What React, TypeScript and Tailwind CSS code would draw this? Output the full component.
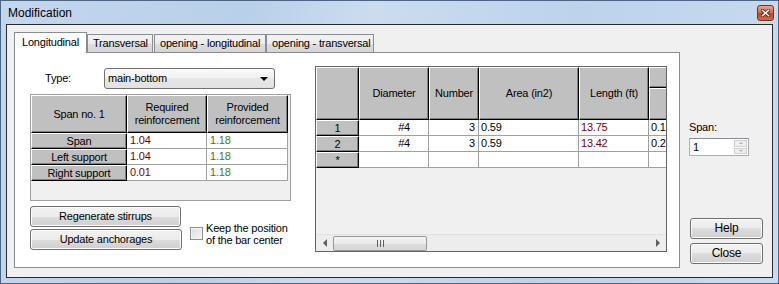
import React from 'react';

const BTN =
    'flex items-center justify-center rounded-[3px] border border-[#707070] bg-[linear-gradient(#f2f2f2_0%,#ebebeb_50%,#dddddd_50%,#cfcfcf_100%)] shadow-[inset_0_0_0_1px_#fcfcfc] text-black';

const HEAD =
    'flex items-center justify-center text-center bg-[#c0c0c0] border border-t-white border-l-white border-r-black border-b-black shadow-[inset_-1px_-1px_0_#808080] leading-[13px] shrink-0';

const CELL = 'flex items-center border-r border-b border-[#a0a0a0] bg-white shrink-0 overflow-hidden whitespace-nowrap';

function Head({ w, children }: { w: string; children: React.ReactNode }) {
    return <div className={`${HEAD} ${w} h-full`}>{children}</div>;
}

function Tab({ label, w, active }: { label: string; w: string; active?: boolean }) {
    if (active) {
        return (
            <div className={`${w} h-[21px] relative z-10 bg-white border border-b-0 border-[#898c95] flex items-start pl-[7px] pt-[3px] whitespace-nowrap`}>
                {label}
            </div>
        );
    }
    return (
        <div className={`${w} h-[19px] border border-[#898c95] bg-[linear-gradient(#f3f3f3_0%,#ebebeb_50%,#dedede_50%,#d5d5d5_100%)] flex items-center pl-[5px] pb-px whitespace-nowrap overflow-hidden`}>
            {label}
        </div>
    );
}

const LEFT_ROWS = [
    { name: 'Span', req: '1.04', prov: '1.18' },
    { name: 'Left support', req: '1.04', prov: '1.18' },
    { name: 'Right support', req: '0.01', prov: '1.18' },
];

const RIGHT_ROWS = [
    { id: '1', dia: '#4', num: '3', area: '0.59', len: '13.75', next: '0.1' },
    { id: '2', dia: '#4', num: '3', area: '0.59', len: '13.42', next: '0.2' },
    { id: '*', dia: '', num: '', area: '', len: '', next: '' },
];

function LeftGrid() {
    return (
        <div className="w-[261px] h-[107px] border border-[#a0a0a0] bg-[#f0f0f0] flex flex-col overflow-hidden">
            <div className="flex h-[38px]">
                <Head w="w-[96px]">Span no. 1</Head>
                <Head w="w-[80px]">Required<br />reinforcement</Head>
                <Head w="w-[81px]">Provided<br />reinforcement</Head>
            </div>
            {LEFT_ROWS.map((r) => (
                <div key={r.name} className="flex h-[16px]">
                    <Head w="w-[96px]">{r.name}</Head>
                    <div className={`${CELL} w-[80px] h-full pl-[3px] text-[#800000]`}>{r.req}</div>
                    <div className={`${CELL} w-[81px] h-full pl-[3px] text-[#3f8000]`}>{r.prov}</div>
                </div>
            ))}
        </div>
    );
}

function RightGrid() {
    return (
        <div className="w-[352px] h-[186px] border border-[#646464] bg-[#f0f0f0] flex flex-col overflow-hidden">
            <div className="flex h-[53px] shrink-0">
                <Head w="w-[43px]">{''}</Head>
                <Head w="w-[70px]">Diameter</Head>
                <Head w="w-[50px]">Number</Head>
                <Head w="w-[100px]">Area (in2)</Head>
                <Head w="w-[70px]">Length (ft)</Head>
                <div className="w-[70px] h-full flex flex-col shrink-0">
                    <div className={`${HEAD} h-[21px] w-full`}>{''}</div>
                    <div className={`${HEAD} flex-1 w-full`}>{''}</div>
                </div>
            </div>
            {RIGHT_ROWS.map((r) => (
                <div key={r.id} className="flex h-[16px] shrink-0">
                    <Head w="w-[43px]">{r.id}</Head>
                    <div className={`${CELL} w-[70px] h-full justify-end pr-[18px]`}>{r.dia}</div>
                    <div className={`${CELL} w-[50px] h-full justify-end pr-[3px]`}>{r.num}</div>
                    <div className={`${CELL} w-[100px] h-full pl-[2px]`}>{r.area}</div>
                    <div className={`${CELL} w-[70px] h-full pl-[2px] text-[#800000]`}>{r.len}</div>
                    <div className={`${CELL} w-[70px] h-full pl-[2px]`}>{r.next}</div>
                </div>
            ))}
            {/* horizontal scrollbar */}
            <div className="mt-auto h-[17px] shrink-0 flex items-center bg-[#ededed] border-t border-[#e2e2e2]">
                <div className="w-[17px] h-full flex items-center justify-center">
                    <div className="w-0 h-0 border-y-[4px] border-y-transparent border-r-[4px] border-r-[#606060]" />
                </div>
                <div className="w-[94px] h-[15px] rounded-[2px] border border-[#979797] bg-[linear-gradient(#f3f3f3_0%,#eaeaea_50%,#dcdcdc_50%,#d8d8d8_100%)] flex items-center justify-center gap-[2px]">
                    <div className="w-px h-[7px] bg-[#606060]" />
                    <div className="w-px h-[7px] bg-[#606060]" />
                    <div className="w-px h-[7px] bg-[#606060]" />
                </div>
                <div className="flex-1" />
                <div className="w-[17px] h-full flex items-center justify-center">
                    <div className="w-0 h-0 border-y-[4px] border-y-transparent border-l-[4px] border-l-[#606060]" />
                </div>
            </div>
        </div>
    );
}

export default function App() {
    return (
        <div className="w-[779px] h-[284px] border border-[#4d6584] bg-[linear-gradient(100deg,#c3d7ed_0%,#b9d0ea_30%,#cbdcef_45%,#bcd3eb_70%,#c9dbee_100%)] flex flex-col font-['Liberation_Sans',Arial,sans-serif] text-[11px] tracking-[-0.2px] text-black leading-[13px]">
            {/* Title bar */}
            <div className="h-[23px] shrink-0 flex items-start justify-between pl-[7px] pr-[4px]">
                <span className="text-[12px] tracking-normal leading-[15px] pt-[5px]">Modification</span>
                <div className="mt-[4px] w-[17px] h-[16px] rounded-[3px] border border-[#7a3021] bg-[linear-gradient(#eaa58f_0%,#d6664a_50%,#c4401f_50%,#d8684a_100%)] flex items-center justify-center">
                    <svg width="9" height="8" viewBox="0 0 9 8">
                        <path d="M1.5 1.5 L7.5 6.5 M7.5 1.5 L1.5 6.5" stroke="#3a1a12" strokeWidth="3" strokeLinecap="square" />
                        <path d="M1.5 1.5 L7.5 6.5 M7.5 1.5 L1.5 6.5" stroke="#ffffff" strokeWidth="1.6" strokeLinecap="square" />
                    </svg>
                </div>
            </div>

            {/* Client area */}
            <div className="mx-[5px] mb-[5px] flex-1 border border-[#2a2a2a] bg-[#f0f0f0] flex pl-[7px] pt-[7px]">
                {/* Tab control */}
                <div className="w-[666px] flex flex-col">
                    <div className="flex items-end h-[21px]">
                        <Tab label="Longitudinal" w="w-[73px]" active />
                        <Tab label="Transversal" w="w-[66px]" />
                        <div className="w-px" />
                        <Tab label="opening - longitudinal" w="w-[112px]" />
                        <Tab label="opening - transversal" w="w-[108px]" />
                    </div>
                    <div className="-mt-px h-[216px] border border-[#898c95] bg-white flex pl-[15px]">
                        {/* Left column */}
                        <div className="w-[261px] flex flex-col pt-[15px]">
                            <div className="flex items-center h-[21px]">
                                <span className="w-[74px] pl-[15px]">Type:</span>
                                <div className="w-[171px] h-[21px] rounded-[3px] border border-[#707070] bg-[linear-gradient(#fafafa_0%,#f1f1f1_50%,#e6e6e6_50%,#e2e2e2_100%)] flex items-center justify-between pl-[3px] pr-[6px]">
                                    <span>main-bottom</span>
                                    <div className="w-0 h-0 border-x-[4px] border-x-transparent border-t-[4px] border-t-black" />
                                </div>
                            </div>
                            <div className="mt-[5px]">
                                <LeftGrid />
                            </div>
                            <div className="mt-[5px] flex items-start">
                                <div className="flex flex-col gap-[2px]">
                                    <div className={`${BTN} w-[151px] h-[21px]`}>Regenerate stirrups</div>
                                    <div className={`${BTN} w-[152px] h-[21px]`}>Update anchorages</div>
                                </div>
                                <div className="ml-[8px] mt-[16px] flex items-start gap-[3px]">
                                    <div className="mt-[5px] w-[13px] h-[13px] border border-[#8e8f8f] bg-[linear-gradient(135deg,#dcdcdc,#f6f6f6)] shadow-[inset_0_0_0_1px_#f4f4f4]" />
                                    <div className="leading-[12px] whitespace-nowrap">Keep the position<br />of the bar center</div>
                                </div>
                            </div>
                        </div>

                        {/* Right grid */}
                        <div className="ml-[24px] mt-[13px]">
                            <RightGrid />
                        </div>
                    </div>
                </div>

                {/* Right column */}
                <div className="ml-[9px] flex flex-col pt-[88px] pb-[13px]">
                    <span className="leading-[14px]">Span:</span>
                    <div className="mt-[4px] w-[60px] h-[18px] border border-[#abadb3] border-t-[#8a8d96] bg-white flex items-center">
                        <span className="flex-1 pl-[3px]">1</span>
                        <div className="w-[15px] h-full flex flex-col gap-px p-px">
                            <div className="flex-1 bg-[#eeeeee] border border-[#d0d0d0] flex items-center justify-center">
                                <div className="w-0 h-0 border-x-[2px] border-x-transparent border-b-[2px] border-b-[#b0b0b0]" />
                            </div>
                            <div className="flex-1 bg-[#eeeeee] border border-[#d0d0d0] flex items-center justify-center">
                                <div className="w-0 h-0 border-x-[2px] border-x-transparent border-t-[2px] border-t-[#b0b0b0]" />
                            </div>
                        </div>
                    </div>
                    <div className="flex-1" />
                    <div className={`${BTN} ml-px w-[73px] h-[21px] text-[12px]`}>Help</div>
                    <div className={`${BTN} ml-px mt-[4px] w-[73px] h-[21px] text-[12px]`}>Close</div>
                </div>
            </div>
        </div>
    );
}
